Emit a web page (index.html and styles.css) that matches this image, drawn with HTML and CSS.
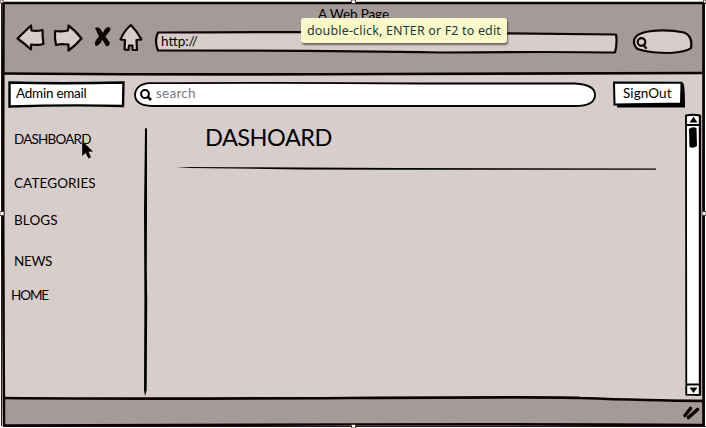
FILE: index.html
```
<!DOCTYPE html>
<html lang="en">
<head>
<meta charset="utf-8">
<title>A Web Page</title>
<link rel="stylesheet" href="styles.css">
</head>
<body>
<div class="window">
  <header class="chrome">
    <div class="title"><span class="fit title-text">A Web Page</span></div>
    <div class="nav">
      <svg class="ink back" viewBox="15 22 32 32"><path d="M17.5 38.5 31 25.5 31.5 30.5 Q37 31.5 42.5 30 Q42.500 37 43.500 44 Q38 45.500 31 44.500 L31 49.500 Q24 43 17.500 38.500Z"/></svg>
      <svg class="ink forward" viewBox="52 22 32 32"><path d="M55 31 Q61 32 68 30.500 L68.500 25.500 Q76 31 81.500 38.500 Q76 45 68.500 50.500 L68.500 44.500 Q61 43.500 56 45 Q54.500 38 55 31Z"/></svg>
      <svg class="stop" viewBox="93 22 20 32"><path d="M95 28 Q98 26 100.500 29 L103 33 Q105 27 109 27 Q112 29 109 32 L105.500 36.500 110 43 Q109 47 106 46 L102.500 40 Q99 46 95.500 46 Q94 43 96 40 L99 36.500Z"/></svg>
      <svg class="ink home" viewBox="118 22 26 32"><path d="M130.800 25 Q137 31 141.500 39.500 L136.500 40 137 50 132.500 50 132.500 45.500 129 45.500 128.500 50 124.500 49.500 125 40 120.500 39.500 Q124 31 130.800 25Z"/></svg>
      <div class="url">
        <svg class="shape ink" viewBox="154 30 464 24"><path d="M158 32.500 Q320 31.500 460 33 L616 34.500 Q617.500 43 615 52.500 Q560 51.500 440 52.500 Q330 50.500 158 50.500 Q154 41 158 32.500Z"/></svg>
        <span class="fit url-text">http://</span>
      </div>
      <svg class="ink find" viewBox="631 27 63 28"><path d="M634 43 Q633 34 648 31.500 Q667 29 684 32.500 Q693 36 691 48 Q686 52 670 53 Q651 53 641 50 Q635 49 634 43Z"/><circle class="lens" cx="641.500" cy="42" r="3.800"/><path d="M643.500 45 646 48"/></svg>
    </div>
  </header>

  <div class="page">
    <div class="tools">
      <div class="account">
        <svg class="shape black field" viewBox="8 80 118 29"><path d="M9.500 82.500 Q60 84 123.500 82.500 L123 106 Q70 104.500 9.500 106.500Z"/></svg>
        <span class="fit account-text">Admin email</span>
      </div>
      <div class="search">
        <svg class="shape black" viewBox="133 80 464 29"><path d="M150 83.200 Q300 82.500 420 83.500 L575 83.500 Q595 84.500 595 95 Q595 106 575 106 L152 106 Q135 105.500 135 94.500 Q136 84 150 83.200Z"/><circle class="lens" cx="145" cy="94" r="3.900"/><path class="handle" d="M148 97 151 100"/></svg>
        <span class="fit search-text">search</span>
      </div>
      <div class="signout">
        <svg class="shape" viewBox="612 80 74 29"><path d="M617 84 683 83 Q685 84 685 107.500 L617 107.500Z"/><path class="plate" d="M614 82.500 681.500 82.800 681 103.500 614.500 104.500Z"/></svg>
        <span class="fit signout-text">SignOut</span>
      </div>
    </div>
    <div class="body">
      <nav class="menu">
        <a class="fit m1">DASHBOARD</a>
        <a class="fit m2">CATEGORIES</a>
        <a class="fit m3">BLOGS</a>
        <a class="fit m4">NEWS</a>
        <a class="fit m5">HOME</a>
      </nav>
      <svg class="divider" viewBox="143 126 6 271"><path d="M145 128.500 Q147 127 147 130 L147 210 146.800 270 147.200 300 146.700 390 145 396 144 390 144.400 300 144 210Z"/></svg>
      <main class="content">
        <h1 class="fit">DASHOARD</h1>
        <svg class="rule" viewBox="176 166 480 5"><path d="M176 167 240 167.200 400 168 656 168.600 656 169.800 390 169.800 300 169.400 190 168Z"/></svg>
      </main>
      <svg class="scroll" viewBox="684 113 18 285"><path class="track" d="M686 115.500 Q693 114 700 115.500 L700 395 686.300 394.700Z"/><path class="track" d="M686 125 H700 M686 384.500 H700"/><path class="right" d="M700 116 V395"/><path d="M689.500 122.500 693.500 116.800 697.500 122.500Z M689.500 387.500 H697.500 L693.500 393Z"/><path d="M689 129 Q692 126 696.500 128 L697 146 Q693 149 689.500 147Z"/></svg>
    </div>
  </div>

  <footer class="status">
    <svg class="grip" viewBox="681 404 22 18"><path d="M685 415.500 690.500 408.500 M688.500 417.500 697.500 409.500"/></svg>
  </footer>

  <svg class="frame" viewBox="0 0 706 428">
    <path class="thin" d="M1.500 3 V426 M3 3 H706 M704.500 3 V426 M3 426.500 H706"/>
    <path class="edge" d="M3.500 3 Q180 3.500 350 3 T703.500 3 V425 Q560 424 350 424.500 T4 425.500 Q2.700 210 3.500 3"/>
    <path class="edge" d="M4 73.500 Q200 75 390 74 T703 73"/>
    <path class="edge" d="M4 398 Q130 399.200 350 398 T580 398 Q650 400.500 703 401"/>
    <path class="handles" d="M0 211.500H4V215.500H0Z M351.500 0H355.500V3.500H351.500Z M351.500 424.500H355.500V428H351.500Z M702 211.500H706V215.500H702Z M0 0H3V3H0Z M703.500 0H706V3H703.500Z"/>
  </svg>
  <svg class="cursor" viewBox="81 140 14 20"><path d="M82.200 141 82.200 156 85.500 153 88.500 158.500 91 157.200 88.500 151.800 93 151.500Z"/></svg>
  <div class="tooltip"><span class="fit">double-click, ENTER or F2 to edit</span></div>
</div>
</body>
</html>
```
FILE: styles.css
```
* { box-sizing: border-box; }

body {
  margin: 0;
  background: #fff;
  overflow: hidden;
  color: #000;
  font-family: Lato, "Liberation Sans", sans-serif;
  font-size: 13.500px;
  line-height: 18px;
}

svg { display: block; flex: none; }
.fit { white-space: nowrap; }

.window {
  position: relative;
  width: 706px;
  height: 428px;
  padding: 3px 3px 3px 3px;
  display: grid;
  grid-template-rows: 71px 1fr 26px;
}

.chrome { background: #a49b99; }
.title { height: 19px; padding: 2px 0 0 315px; }
.title-text { letter-spacing: -0.100px; }

.nav { display: flex; align-items: flex-start; padding-left: 12px; }
.ink { fill: #d7cecc; stroke: #120304; stroke-width: 2.200; stroke-linejoin: round; stroke-linecap: round; }
.back { width: 32px; height: 32px; }
.forward { width: 32px; height: 32px; margin-left: 5px; }
.stop { width: 20px; height: 32px; margin-left: 9px; fill: #120304; }
.home { width: 26px; height: 32px; margin-left: 5px; }
.url { position: relative; width: 464px; height: 24px; margin: 8px 0 0 10px; padding: 2px 0 0 7px; }
.find { width: 63px; height: 28px; margin: 5px 0 0 13px; }
.lens { fill: none; stroke-width: 2.200; }
.shape { position: absolute; left: 0; top: 0; width: 100%; height: 100%; }
.shape + .fit { position: relative; }

.page { background: #d7cecc; display: grid; grid-template-rows: 39px 1fr; }
.tools { display: flex; padding: 6px 0 0 5px; }
.tools > div { position: relative; height: 29px; padding-top: 4px; }
.black { fill: #fff; stroke: #000; stroke-width: 1.800; }
.field { stroke-width: 2.400; }
.account { width: 118px; padding-left: 8px; }
.account-text { letter-spacing: -0.250px; }
.search { width: 464px; margin-left: 7px; padding-left: 23px; color: #777b86; }
.search-text { letter-spacing: 0.250px; }
.search .lens { stroke-width: 2; }
.handle { stroke-width: 2.600; }
.signout { width: 74px; margin-left: 15px; padding-left: 11px; }
.signout-text { letter-spacing: 0.100px; }
.plate { fill: #fff; stroke: #000; stroke-width: 2; }

.body { display: flex; }
.menu { width: 140px; padding: 17px 0 0 11px; display: flex; flex-direction: column; align-items: flex-start; }
.m1 { letter-spacing: -0.800px; }
.m2 { margin-top: 26px; letter-spacing: 0.100px; }
.m3 { margin-top: 19px; letter-spacing: 0.100px; }
.m4 { margin-top: 23px; letter-spacing: -0.300px; }
.m5 { margin: 16px 0 0 -3px; letter-spacing: -1.100px; }
.divider { width: 6px; height: 271px; margin-top: 13px; }
.content { width: 535px; padding-left: 27px; }
h1 { margin: 9px 0 0 29px; font-size: 23.500px; font-weight: 400; line-height: 30px; letter-spacing: -0.500px; }
.rule { width: 480px; height: 5px; margin-top: 14px; }
.scroll { width: 18px; height: 285px; }
.track { fill: #fff; stroke: #000; stroke-width: 1.800; }
.right { fill: none; stroke: #000; stroke-width: 2.400; }

.status { background: #a49b99; display: flex; justify-content: flex-end; padding-top: 5px; }
.grip { width: 22px; height: 18px; fill: none; stroke: #120304; stroke-width: 3.600; stroke-linecap: round; }

.frame { position: absolute; left: 0; top: 0; width: 706px; height: 428px; fill: none; pointer-events: none; }
.edge { stroke: #0b0202; stroke-width: 2.600; }
.thin { stroke: #321410; stroke-width: 1; }
.handles { fill: #fff; stroke: #2b1511; stroke-width: 0.700; }

.cursor { position: absolute; left: 81px; top: 140px; width: 14px; height: 20px; }
.tooltip {
  position: absolute;
  left: 301px;
  top: 18px;
  width: 206px;
  height: 25px;
  padding-left: 6px;
  border-radius: 3px;
  background: #fafac8;
  box-shadow: 1px 2px 2px rgba(0, 0, 0, 0.500);
  color: #183b40;
  font-family: "Noto Sans", sans-serif;
  font-size: 12.500px;
  line-height: 25px;
  letter-spacing: 0.160px;
}
```
